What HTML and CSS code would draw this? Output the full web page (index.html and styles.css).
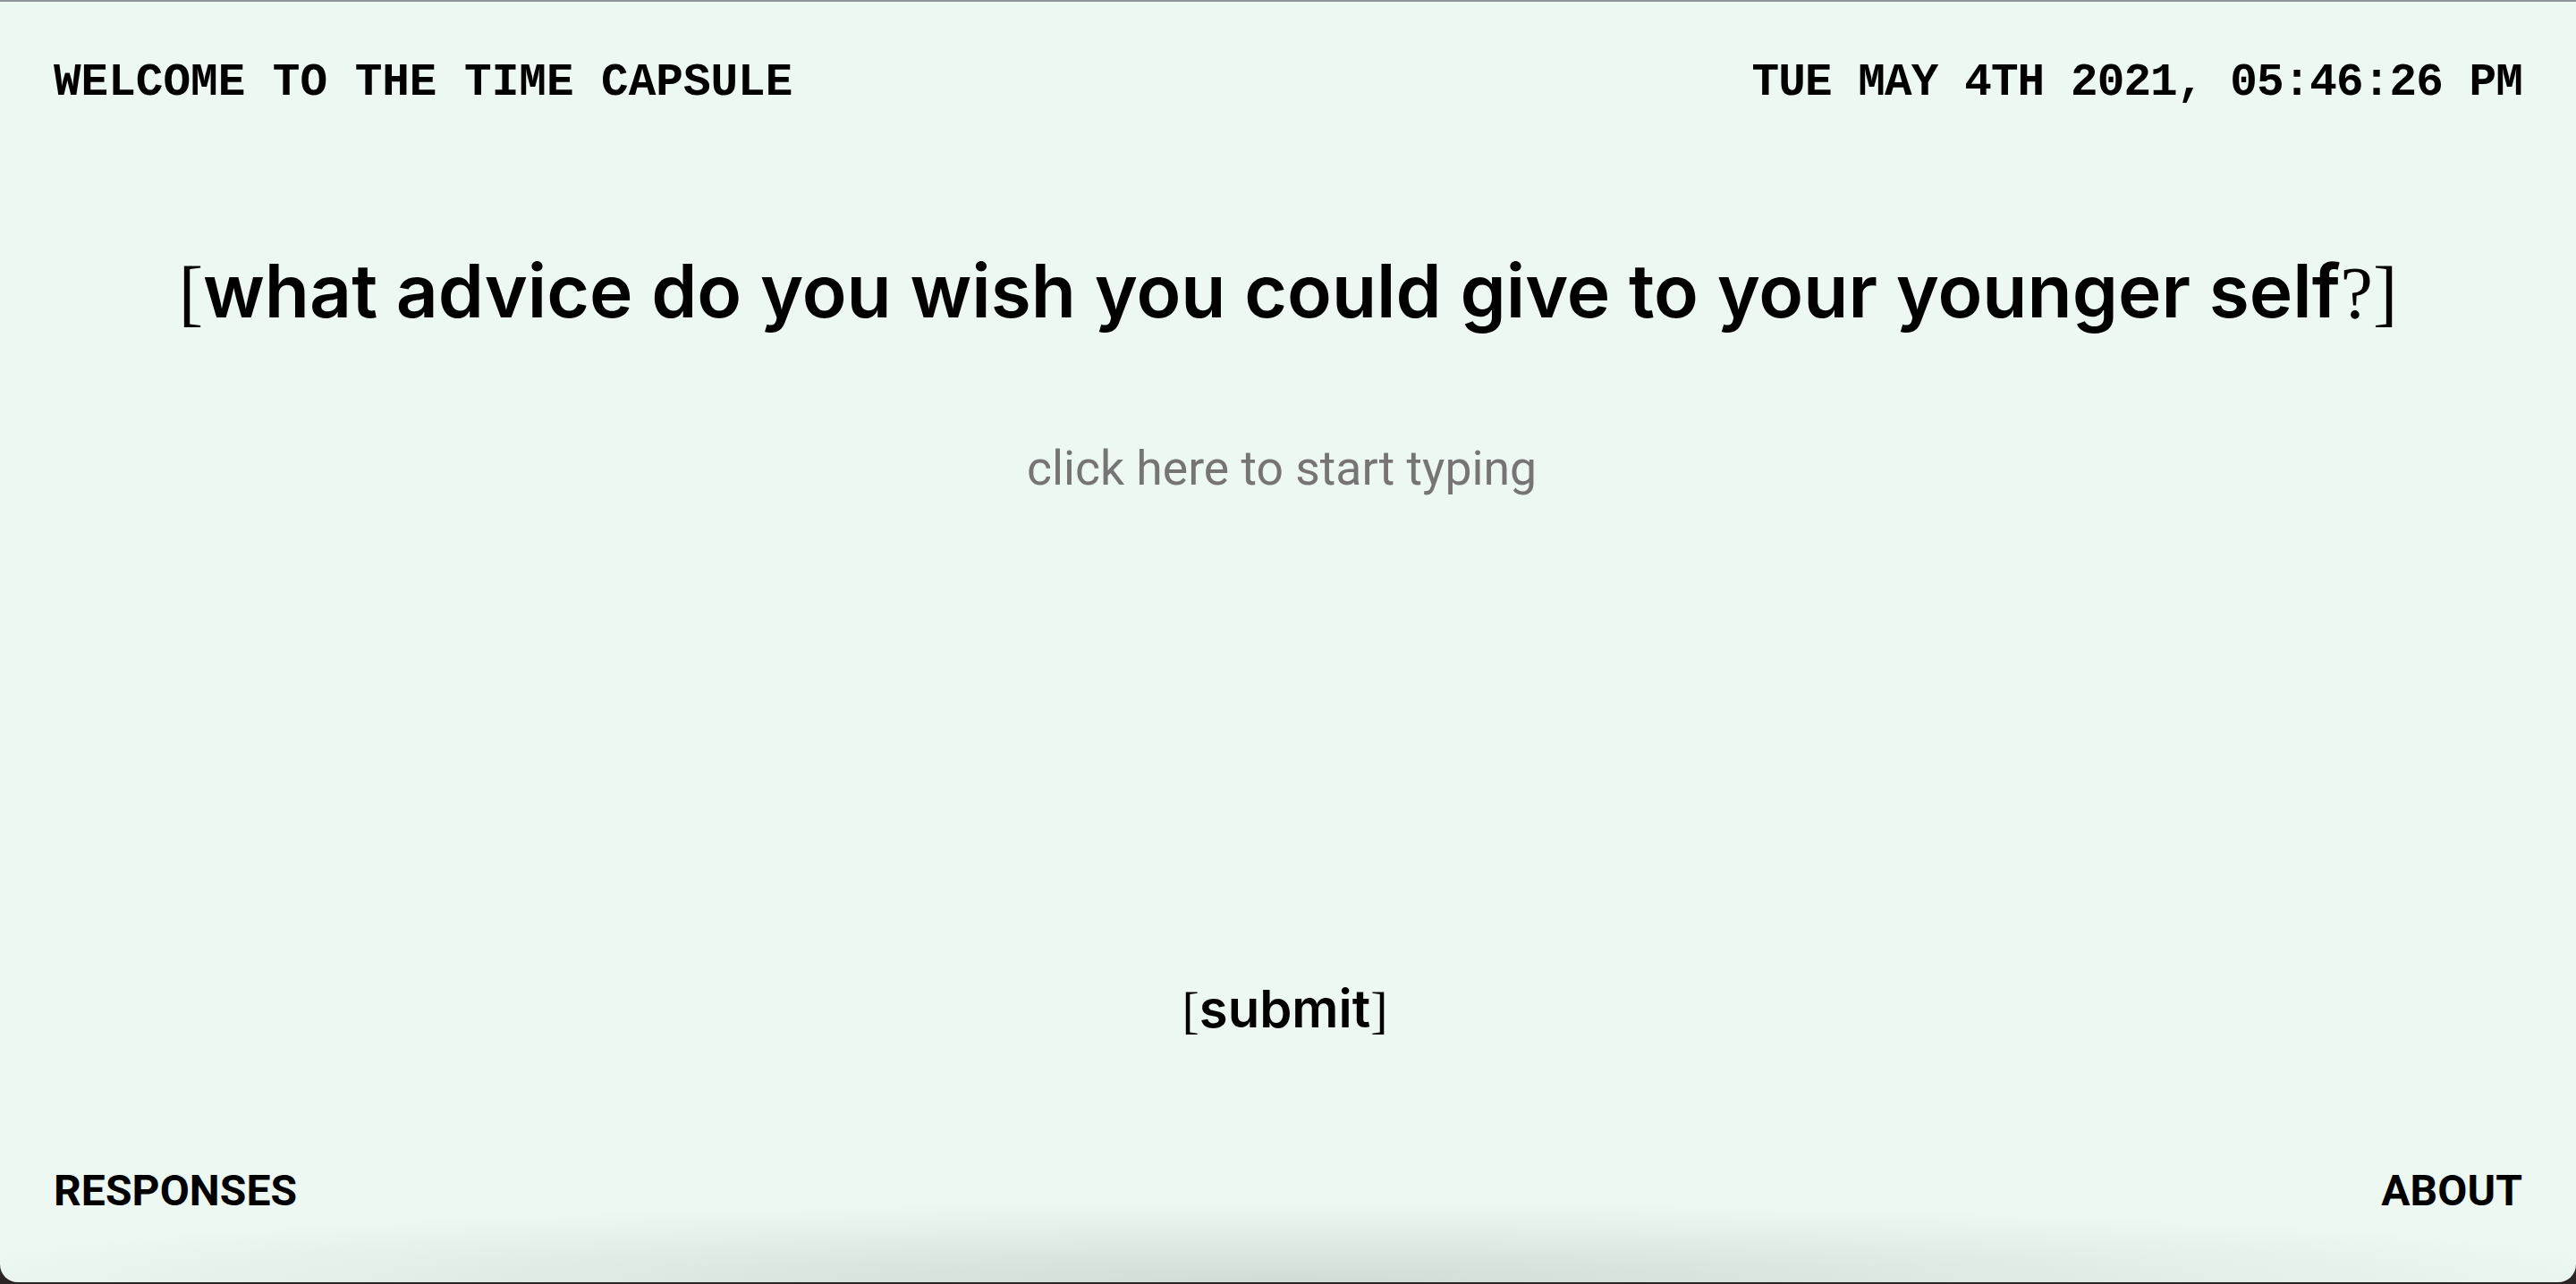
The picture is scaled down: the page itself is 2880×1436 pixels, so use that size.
FILE: index.html
```html
<!DOCTYPE html>
<html lang="en">
<head>
<meta charset="utf-8">
<title>Time Capsule</title>
<link rel="stylesheet" href="styles.css">
</head>
<body>
<div class="window">
  <header class="top-bar">
    <span class="brand">WELCOME TO THE TIME CAPSULE</span>
    <span class="clock">TUE MAY 4TH 2021, 05:46:26 PM</span>
  </header>
  <main class="stage">
    <h1 class="prompt"><span class="mark">[</span>what advice do you wish you could give to your younger self<span class="mark">?]</span></h1>
    <div class="entry"><span class="placeholder">click here to start typing</span></div>
    <button class="submit" type="button"><span class="mark">[</span>submit<span class="mark">]</span></button>
  </main>
  <footer class="bottom-bar">
    <a class="nav-link" href="#">RESPONSES</a>
    <a class="nav-link" href="#">ABOUT</a>
  </footer>
</div>
</body>
</html>
```
FILE: styles.css
```css
* { box-sizing: border-box; }
html, body { margin: 0; padding: 0; }
body {
  background: #2b2623;
  height: 1436px;
  overflow: hidden;
}
.window {
  position: relative;
  height: 1434px;
  background: #edf8f2;
  border-top: 2px solid #8f9597;
  border-radius: 0 0 20px 20px;
  display: flex;
  flex-direction: column;
  overflow: hidden;
}
.window::after {
  content: "";
  position: absolute;
  left: 0; right: 0; bottom: 0;
  height: 90px;
  background: radial-gradient(ellipse 55% 100% at 50% 100%, rgba(150,170,160,0.35), rgba(150,170,160,0) 100%);
  pointer-events: none;
}
.top-bar {
  display: flex;
  justify-content: space-between;
  padding: 61px 60px 0 60px;
  font-family: "Liberation Mono", "DejaVu Sans Mono", monospace;
  font-weight: 700;
  font-size: 51px;
  line-height: 60px;
  color: #000;
}
.clock { letter-spacing: -0.9px; }
.stage {
  flex: 1;
  display: flex;
  flex-direction: column;
  align-items: center;
}
.prompt {
  margin: 153px 0 0 0;
  font-family: Inter, Roboto, "Liberation Sans", sans-serif;
  font-weight: 600;
  font-size: 82px;
  line-height: 100px;
  color: #000;
  white-space: nowrap;
}
.mark {
  font-family: "Liberation Serif", serif;
  font-weight: 400;
}
.entry {
  margin-top: 114px;
  margin-right: 14px;
  font-family: Roboto, "Liberation Sans", sans-serif;
  font-size: 53.5px;
  line-height: 64px;
  color: #757575;
}
.submit {
  margin-top: auto;
  margin-right: 7px;
  background: none;
  border: 0;
  padding: 0;
  font-family: Inter, Roboto, "Liberation Sans", sans-serif;
  font-weight: 600;
  font-size: 58px;
  line-height: 70px;
  color: #000;
  cursor: pointer;
}
.bottom-bar {
  display: flex;
  justify-content: space-between;
  padding: 139px 60px 74px 60px;
}
.nav-link {
  font-family: Roboto, "Liberation Sans", sans-serif;
  font-weight: 700;
  font-size: 48px;
  line-height: 56px;
  color: #000;
  text-decoration: none;
  letter-spacing: 0.1px;
}
```
